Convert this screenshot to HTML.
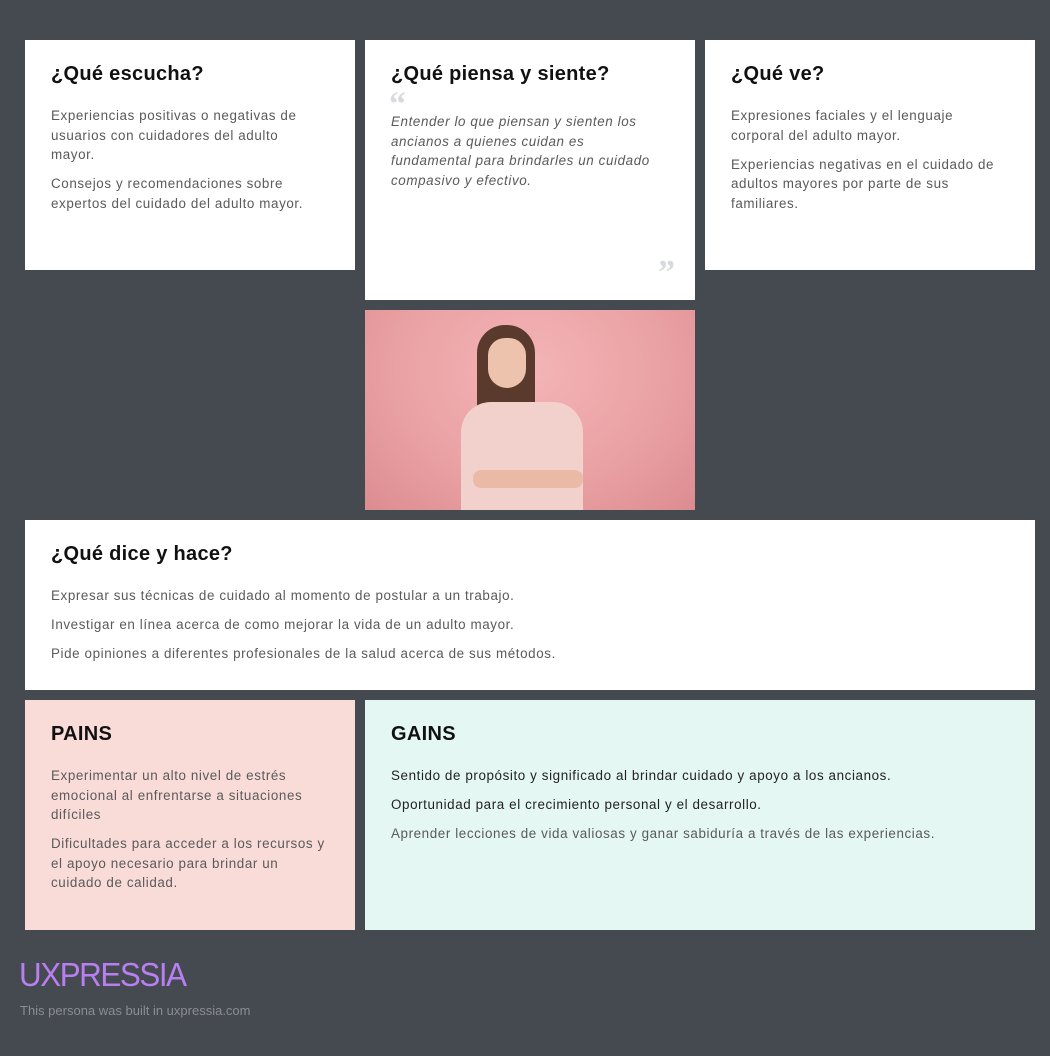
<!DOCTYPE html>
<html><head><meta charset="utf-8"><style>
body{margin:0;width:1050px;height:1056px;background:#454950;font-family:"Liberation Sans",sans-serif;position:relative;overflow:hidden}
.c{position:absolute;background:#fff;box-sizing:border-box;padding:23px 30px 22px 26px}
h2{margin:0 0 20px;font-size:20px;font-weight:600;color:#111;letter-spacing:0.3px}
p{margin:0 0 9.5px;font-size:13.4px;line-height:19.6px;color:#5a5a5a;letter-spacing:0.6px}
.q{color:#d8dadf;font-family:"Liberation Serif",serif;font-size:34px;font-weight:bold;position:absolute;line-height:1}
</style></head><body>
<div class="c" style="left:25px;top:40px;width:330px;height:230px"><h2>¿Qué escucha?</h2>
<p>Experiencias positivas o negativas de usuarios con cuidadores del adulto mayor.</p>
<p>Consejos y recomendaciones sobre expertos del cuidado del adulto mayor.</p></div>
<div class="c" style="left:365px;top:40px;width:330px;height:260px"><h2>¿Qué piensa y siente?</h2>
<div class="q" style="left:24px;top:48px">“</div>
<p style="font-style:italic;margin-top:26px">Entender lo que piensan y sienten los ancianos a quienes cuidan es fundamental para brindarles un cuidado compasivo y efectivo.</p>
<div class="q" style="left:293px;top:216px">”</div></div>
<div class="c" style="left:705px;top:40px;width:330px;height:230px"><h2>¿Qué ve?</h2>
<p>Expresiones faciales y el lenguaje corporal del adulto mayor.</p>
<p>Experiencias negativas en el cuidado de adultos mayores por parte de sus familiares.</p></div>
<div style="position:absolute;left:365px;top:310px;width:330px;height:200px;background:radial-gradient(ellipse at 50% 30%,#f4b4b6,#e9a0a3 60%,#dc8c90);overflow:hidden">
<div style="position:absolute;left:112px;top:15px;width:58px;height:110px;background:#5a3a2c;border-radius:28px 28px 10px 10px"></div>
<div style="position:absolute;left:123px;top:28px;width:38px;height:50px;background:#eec3ad;border-radius:18px 18px 20px 20px"></div>
<div style="position:absolute;left:96px;top:92px;width:122px;height:120px;background:#f2d0cc;border-radius:30px 30px 0 0"></div>
<div style="position:absolute;left:108px;top:160px;width:110px;height:18px;background:#eabaa6;border-radius:8px"></div>
</div>
<div class="c" style="left:25px;top:520px;width:1010px;height:170px"><h2>¿Qué dice y hace?</h2>
<p>Expresar sus técnicas de cuidado al momento de postular a un trabajo.</p>
<p>Investigar en línea acerca de como mejorar la vida de un adulto mayor.</p>
<p>Pide opiniones a diferentes profesionales de la salud acerca de sus métodos.</p></div>
<div class="c" style="left:25px;top:700px;width:330px;height:230px;background:#f9dcd8"><h2>PAINS</h2>
<p>Experimentar un alto nivel de estrés emocional al enfrentarse a situaciones difíciles</p>
<p>Dificultades para acceder a los recursos y el apoyo necesario para brindar un cuidado de calidad.</p></div>
<div class="c" style="left:365px;top:700px;width:670px;height:230px;background:#e4f7f3"><h2>GAINS</h2>
<p style="color:#222">Sentido de propósito y significado al brindar cuidado y apoyo a los ancianos.</p>
<p style="color:#222">Oportunidad para el crecimiento personal y el desarrollo.</p>
<p>Aprender lecciones de vida valiosas y ganar sabiduría a través de las experiencias.</p></div>
<div style="position:absolute;left:19px;top:956px;font-size:33px;color:#b77ff0;letter-spacing:-1.5px;transform:scaleX(0.95);transform-origin:left">UXPRESSIA</div>
<div style="position:absolute;left:20px;top:1003px;font-size:13px;color:#8a8d94">This persona was built in uxpressia.com</div>
</body></html>
